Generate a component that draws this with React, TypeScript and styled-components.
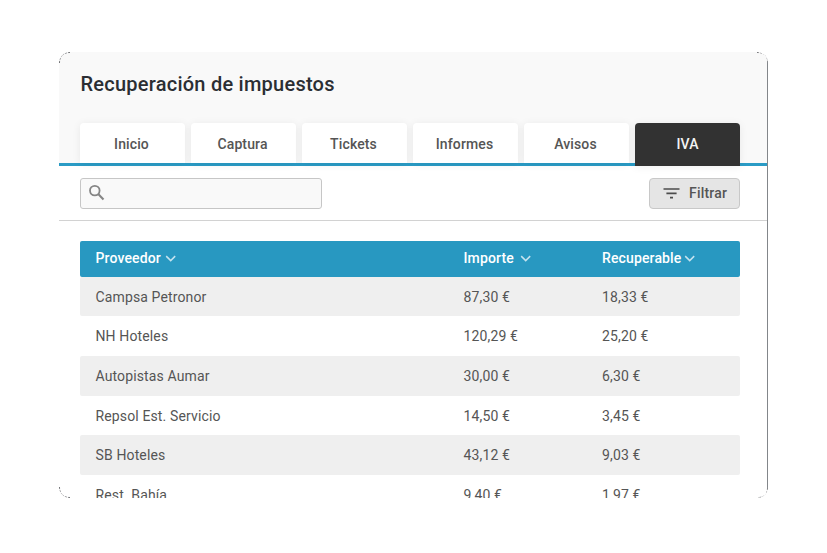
import React from "react";
import styled, { createGlobalStyle } from "styled-components";

const GlobalStyle = createGlobalStyle`
  * { box-sizing: border-box; }
  body { margin: 0; background: #fff; font-family: Roboto, sans-serif; overflow: hidden; }
`;

const Page = styled.main`
  width: 827px;
  height: 553px;
  padding: 52px 59px;
  background: #fff;
`;

const Card = styled.section`
  position: relative;
  width: 709px;
  height: 446px;
  overflow: hidden;
  border-radius: 11px;
  background: #fff;
`;

const Header = styled.header`
  height: 114px;
  padding: 0 28px 0 21px;
  background: #f9f9f9;
  border-bottom: 3px solid #2a9bc5;
`;

const Title = styled.h1`
  margin: 0;
  height: 71px;
  padding: 20px 0 0 0.5px;
  font-size: 20px;
  line-height: 24px;
  font-weight: 500;
  letter-spacing: 0.24px;
  color: #2b2e33;
`;

const Tabs = styled.nav`
  display: flex;
  gap: 6px;
`;

const Tab = styled.button<{ $active?: boolean }>`
  flex: none;
  width: 105px;
  height: ${(p) => (p.$active ? 43 : 40)}px;
  padding: ${(p) => (p.$active ? "0 0 2px" : "1px 2px 0 0")};
  border: 0;
  border-radius: 4px 4px 0 0;
  box-shadow: 0 1px 8px rgba(0, 0, 0, 0.07);
  background: ${(p) => (p.$active ? "#323232" : "#fff")};
  color: ${(p) => (p.$active ? "#f4f4f4" : "#555")};
  font: 500 14px/40px Roboto, sans-serif;
  letter-spacing: 0.12px;
`;

const Toolbar = styled.div`
  display: flex;
  justify-content: space-between;
  height: 55px;
  padding: 12px 28px 0 21px;
  border-bottom: 1px solid #d2d2d2;
`;

const SearchBox = styled.div`
  width: 242px;
  height: 31px;
  padding: 5px 7px;
  border: 1px solid #c6c6c6;
  border-radius: 3px;
  background: #f9f9f9;
`;

const FilterButton = styled.button`
  display: flex;
  align-items: center;
  gap: 9px;
  width: 91px;
  height: 31px;
  padding: 0 0 0 13px;
  border: 1px solid #c8c8c8;
  border-radius: 4px;
  background: #e5e5e5;
  color: #555;
  font: 500 14px/29px Roboto, sans-serif;
  letter-spacing: 0.2px;
`;

const Icon = styled.svg`
  display: block;
  flex: none;
`;

const Table = styled.div`
  margin: 20px 28px 0 21px;
`;

const Row = styled.div<{ $striped?: boolean }>`
  display: grid;
  grid-template-columns: 368px 138.5px 1fr;
  height: 39.7px;
  padding-left: 15.5px;
  border-radius: 2px;
  background: ${(p) => (p.$striped ? "#efefef" : "#fff")};
  color: #555;
  font-size: 14px;
  line-height: 40px;
  letter-spacing: 0.13px;
`;

const HeadRow = styled(Row)`
  height: 35.7px;
  border-radius: 2px;
  background: #2898c1;
  color: #fff;
  font-weight: 500;
  line-height: 34px;
`;

const Cell = styled.div`
  white-space: nowrap;
`;

const HeadCell = styled.div<{ $gap: number }>`
  display: flex;
  align-items: center;
  gap: ${(p) => p.$gap}px;
  height: 34px;
`;

const Outline = styled(Icon)`
  position: absolute;
  inset: 0;
  pointer-events: none;
`;

const tabs = ["Inicio", "Captura", "Tickets", "Informes", "Avisos", "IVA"];

const columns = [
  { label: "Proveedor", gap: 4.5 },
  { label: "Importe", gap: 6.5 },
  { label: "Recuperable", gap: 3 },
];

const rows = [
  ["Campsa Petronor", "87,30 €", "18,33 €"],
  ["NH Hoteles", "120,29 €", "25,20 €"],
  ["Autopistas Aumar", "30,00 €", "6,30 €"],
  ["Repsol Est. Servicio", "14,50 €", "3,45 €"],
  ["SB Hoteles", "43,12 €", "9,03 €"],
  ["Rest. Bahía", "9,40 €", "1,97 €"],
];

const SearchIcon = () => (
  <Icon width="17" height="17" viewBox="0 0 17 17" fill="none" stroke="#858585" strokeWidth="1.8">
    <circle cx="6.8" cy="6.6" r="4.8" />
    <path d="M10.2 10.1 L15.5 15.4" strokeWidth="2.1" />
  </Icon>
);

const FilterIcon = () => (
  <Icon width="17" height="13" viewBox="0 0 17 13" fill="none" stroke="#4c4c4c" strokeWidth="1.7">
    <path d="M0.5 2H16.5M3.4 6.3H13.6M7 10.6H10" />
  </Icon>
);

const Chevron = () => (
  <Icon width="12" height="8" viewBox="0 0 12 8" fill="none" stroke="#c5e3ef" strokeWidth="1.5">
    <path d="M1.2 2.1 L5.7 6.6 L10.2 2.1" />
  </Icon>
);

export default function App() {
  return (
    <>
      <GlobalStyle />
      <Page>
        <Card>
          <Header>
            <Title>Recuperación de impuestos</Title>
            <Tabs>
              {tabs.map((label) => (
                <Tab key={label} $active={label === "IVA"}>{label}</Tab>
              ))}
            </Tabs>
          </Header>
          <Toolbar>
            <SearchBox><SearchIcon /></SearchBox>
            <FilterButton><FilterIcon />Filtrar</FilterButton>
          </Toolbar>
          <Table>
            <HeadRow>
              {columns.map((c) => (
                <HeadCell key={c.label} $gap={c.gap}>{c.label}<Chevron /></HeadCell>
              ))}
            </HeadRow>
            {rows.map((row, i) => (
              <Row key={row[0]} $striped={i % 2 === 0}>
                {row.map((value) => <Cell key={value}>{value}</Cell>)}
              </Row>
            ))}
          </Table>
          <Outline width="709" height="446" viewBox="0 0 709 446" fill="none" stroke="#4b4d50">
            <path d="M708.5 9V436" stroke="#83868a" />
            <path d="M0.5 11Q0.5 0.5 11 0.5M698 0.5Q708.5 0.5 708.5 9M708.5 436Q708.5 445.5 699 445.5M0.5 435Q0.5 445.5 11 445.5" strokeDasharray="2 1" strokeWidth="0.8" />
          </Outline>
        </Card>
      </Page>
    </>
  );
}
